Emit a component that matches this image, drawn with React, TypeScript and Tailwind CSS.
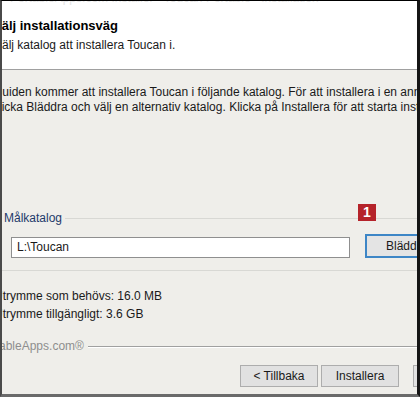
import React from "react";

export default function App() {
  return (
    <div
      className="w-[420px] h-[397px] overflow-hidden flex flex-col bg-[#efeeea] border-t border-t-black border-l-2 border-l-[#4a4a4a] border-r-[3px] border-r-[#151515] border-b-[3px] border-b-[#6a6a6a] text-[12px] text-[#1a1a1a] whitespace-nowrap"
      style={{ fontFamily: '"Liberation Sans", Arial, sans-serif' }}
    >
      {/* Header */}
      <div className="h-[69px] shrink-0 bg-white border-b border-b-[#a0a0a0] flex flex-col overflow-hidden">
        <div className="mt-[-10px] ml-[8px] h-[14px] shrink-0 text-[#e4e4e4] text-[12px] leading-[14px]">
          PortableApps.com Installer - Toucan Portable - Installation
        </div>
        <div className="ml-[-9px] mt-[13px] shrink-0 font-bold text-[13px] leading-[16px] text-black">
          Välj installationsväg
        </div>
        <div className="ml-[-8px] mt-[4px] shrink-0 leading-[15px]">
          Välj katalog att installera Toucan i.
        </div>
      </div>

      {/* Body */}
      <div className="flex flex-col shrink-0">
        <div className="ml-[-9px] mt-[15px] leading-[15px]">
          <div>Guiden kommer att installera Toucan i följande katalog. För att installera i en annan katalog,</div>
          <div>klicka Bläddra och välj en alternativ katalog. Klicka på Installera för att starta installationen.</div>
        </div>

        {/* Group box */}
        <div className="mt-[96px] flex flex-col">
          <div className="relative flex items-center h-[14px]">
            <span className="ml-[2px] pr-[3px] text-[#1e3a6a] leading-[14px]">Målkatalog</span>
            <div className="flex-1 h-px bg-[#d8d8d4]" />
            <div className="absolute left-[356px] top-[-7px] w-[18px] h-[17px] bg-[#b5232a] text-white font-bold text-[14px] leading-[17px] text-center">
              1
            </div>
          </div>
          <div className="flex items-start mt-[9px]">
            <div className="ml-[9px] mt-[3px] w-[339px] h-[21px] shrink-0 bg-white border border-[#8f8f8f] flex items-center pl-[5px] leading-[15px]">
              L:\Toucan
            </div>
            <div className="ml-[15px] w-[80px] h-[24px] shrink-0 border-2 border-[#3d86c6] bg-[#e4e4e4] flex items-center pl-[19px] leading-[15px]">
              Bläddra...
            </div>
          </div>
          <div className="mt-[12px] h-px bg-[#d8d8d4]" />
        </div>

        {/* Space info */}
        <div className="ml-[-8px] mt-[18px] flex flex-col gap-[3px] leading-[15px]">
          <div>Utrymme som behövs: 16.0 MB</div>
          <div>Utrymme tillgängligt: 3.6 GB</div>
        </div>

        {/* Branding line */}
        <div className="mt-[17px] flex items-center">
          <span className="ml-[-25px] text-[#8e8e8e] leading-[15px]">PortableApps.com®</span>
          <div className="ml-[4px] flex-1 flex flex-col">
            <div className="h-px bg-[#a0a0a0]" />
            <div className="h-px bg-white" />
          </div>
        </div>

        {/* Buttons */}
        <div className="mt-[11px] flex items-center">
          <div className="ml-[238px] w-[78px] h-[22px] shrink-0 border border-[#adadad] bg-[#e1e1e1] flex items-center justify-center leading-[15px]">
            &lt; Tillbaka
          </div>
          <div className="ml-[3px] w-[78px] h-[22px] shrink-0 border border-[#adadad] bg-[#e1e1e1] flex items-center justify-center leading-[15px]">
            Installera
          </div>
          <div className="ml-[14px] w-[78px] h-[22px] shrink-0 border border-[#adadad] bg-[#e1e1e1] flex items-center justify-center leading-[15px]">
            Avbryt
          </div>
        </div>
      </div>
    </div>
  );
}
